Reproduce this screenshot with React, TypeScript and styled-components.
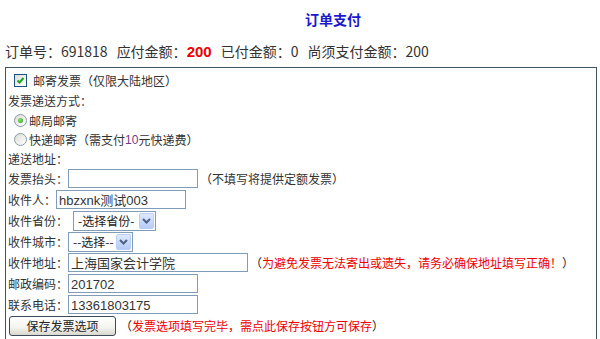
import React from "react";
import styled, { createGlobalStyle } from "styled-components";

const Global = createGlobalStyle`
  html, body { margin: 0; padding: 0; background: #fff; }
  body { font-family: "Noto Sans CJK SC", "Noto Sans", "Liberation Sans", sans-serif; color: #333; }
`;

const Page = styled.div`
  width: 600px;
  height: 339px;
  overflow: hidden;
  padding-left: 5px;
  box-sizing: border-box;
`;

const Title = styled.div`
  height: 38px;
  line-height: 38px;
  padding-left: 300px;
  font-size: 14px;
  font-weight: bold;
  color: #1a1acc;
`;

const Summary = styled.div`
  height: 27px;
  line-height: 27px;
  font-size: 14px;
  color: #333;
  display: flex;
`;

const SumItem = styled.span`
  margin-right: 9px;
  white-space: pre;
`;

const Strong = styled.b`
  color: #e00;
  font-family: "Liberation Sans", sans-serif;
  font-size: 15px;
`;

const Box = styled.div`
  margin-top: 2px;
  width: 592px;
  height: 300px;
  border: 1px solid #3f5563;
  border-bottom: none;
  box-sizing: border-box;
  padding: 2px 0 0 2px;
  font-size: 12px;
`;

const Row = styled.div<{ h: number; indent?: number }>`
  height: ${(p) => p.h}px;
  display: flex;
  align-items: center;
  padding-left: ${(p) => p.indent ?? 0}px;
  white-space: nowrap;
`;

const Label = styled.span`
  display: inline-block;
`;

const CheckBox = styled.span`
  width: 11px;
  height: 11px;
  border: 1px solid #1c5180;
  background: linear-gradient(135deg, #dcdcd7, #fff);
  display: inline-flex;
  align-items: center;
  justify-content: center;
  margin-right: 6px;
`;

const Radio = styled.span<{ on?: boolean }>`
  width: 11px;
  height: 11px;
  border-radius: 50%;
  border: 1px solid #8a9aa8;
  background: linear-gradient(135deg, #dcdcd7, #fff);
  display: inline-flex;
  align-items: center;
  justify-content: center;
  margin-right: 2px;
  &::after {
    content: "";
    display: ${(p) => (p.on ? "block" : "none")};
    width: 5px;
    height: 5px;
    border-radius: 50%;
    background: radial-gradient(circle at 40% 40%, #8de07a, #2a9a16);
  }
`;

const Paren = styled.span`
  color: #222;
`;

const Purple = styled.span`
  color: #6a3d8a;
  font-family: "Liberation Sans", sans-serif;
`;

const Red = styled.span`
  color: #e00;
`;

const TextInput = styled.div<{ w: number }>`
  width: ${(p) => p.w}px;
  height: 19px;
  box-sizing: border-box;
  border: 1px solid #7f9db9;
  padding: 0 2px;
  line-height: 17px;
  font-size: 13px;
  color: #333;
  background: #fff;
  margin-right: 2px;
`;

const Latin = styled.span`
  font-family: "Liberation Sans", sans-serif;
  font-size: 13px;
`;

const Select = styled.div<{ w: number; ml?: number }>`
  width: ${(p) => p.w}px;
  height: 20px;
  box-sizing: border-box;
  border: 1px solid #7f9db9;
  margin-left: ${(p) => p.ml ?? 0}px;
  display: flex;
  align-items: center;
  padding: 1px;
  background: #fff;
  font-size: 12px;
  color: #222;
`;

const SelText = styled.span`
  flex: 1;
  padding-left: 3px;
`;

const ArrowBtn = styled.span`
  width: 15px;
  height: 16px;
  box-sizing: border-box;
  border: 1px solid #b9cdf5;
  border-radius: 2px;
  background: linear-gradient(180deg, #dfe9fd, #b6cbf8);
  display: flex;
  align-items: center;
  justify-content: center;
`;

const Button = styled.button`
  margin-left: 1px;
  width: 107px;
  height: 20px;
  border: 1px solid #3c4a5a;
  border-radius: 3px;
  background: linear-gradient(180deg, #ffffff 0%, #f3f3ef 60%, #d8d8cf 100%);
  font-family: "Noto Sans CJK SC", sans-serif;
  font-size: 12px;
  color: #222;
  padding: 0;
  line-height: 16px;
  margin-right: 4px;
`;

const Arrow = () => (
  <svg width="9" height="6" viewBox="0 0 9 6">
    <path d="M1 1 L4.5 4.5 L8 1" fill="none" stroke="#4d6185" strokeWidth="2" />
  </svg>
);

const Check = () => (
  <svg width="9" height="9" viewBox="0 0 9 9">
    <path d="M1.5 4.5 L3.5 6.5 L7.5 2" fill="none" stroke="#21a121" strokeWidth="2" />
  </svg>
);

export default function App() {
  return (
    <Page>
      <Global />
      <Title>订单支付</Title>
      <Summary>
        <SumItem>订单号：691818</SumItem>
        <SumItem>
          应付金额：<Strong>200</Strong>
        </SumItem>
        <SumItem>已付金额：0</SumItem>
        <SumItem>尚须支付金额：200</SumItem>
      </Summary>
      <Box>
        <Row h={20} indent={6}>
          <CheckBox>
            <Check />
          </CheckBox>
          邮寄发票<Paren>（</Paren>仅限大陆地区<Paren>）</Paren>
        </Row>
        <Row h={20}>发票递送方式：</Row>
        <Row h={20} indent={6}>
          <Radio on />
          邮局邮寄
        </Row>
        <Row h={19} indent={6}>
          <Radio />
          快递邮寄<Paren>（</Paren>需支付<Purple>10</Purple>元快递费<Paren>）</Paren>
        </Row>
        <Row h={19}>递送地址：</Row>
        <Row h={21}>
          <Label>发票抬头：</Label>
          <TextInput w={130} />
          <Paren>（</Paren>不填写将提供定额发票<Paren>）</Paren>
        </Row>
        <Row h={21}>
          <Label>收件人：</Label>
          <TextInput w={130}>
            <Latin>hbzxnk</Latin>测试<Latin>003</Latin>
          </TextInput>
        </Row>
        <Row h={21}>
          <Label>收件省份：</Label>
          <Select w={83} ml={5}>
            <SelText>-选择省份-</SelText>
            <ArrowBtn>
              <Arrow />
            </ArrowBtn>
          </Select>
        </Row>
        <Row h={21}>
          <Label>收件城市：</Label>
          <Select w={65}>
            <SelText>--选择--</SelText>
            <ArrowBtn>
              <Arrow />
            </ArrowBtn>
          </Select>
        </Row>
        <Row h={21}>
          <Label>收件地址：</Label>
          <TextInput w={180}>上海国家会计学院</TextInput>
          <Paren>（</Paren>
          <Red>为避免发票无法寄出或遗失，请务必确保地址填写正确！</Red>
          <Paren>）</Paren>
        </Row>
        <Row h={21}>
          <Label>邮政编码：</Label>
          <TextInput w={130}>
            <Latin>201702</Latin>
          </TextInput>
        </Row>
        <Row h={21}>
          <Label>联系电话：</Label>
          <TextInput w={130}>
            <Latin>13361803175</Latin>
          </TextInput>
        </Row>
        <Row h={21}>
          <Button>保存发票选项</Button>
          <Paren>（</Paren>
          <Red>发票选项填写完毕，需点此保存按钮方可保存</Red>
          <Paren>）</Paren>
        </Row>
      </Box>
    </Page>
  );
}
